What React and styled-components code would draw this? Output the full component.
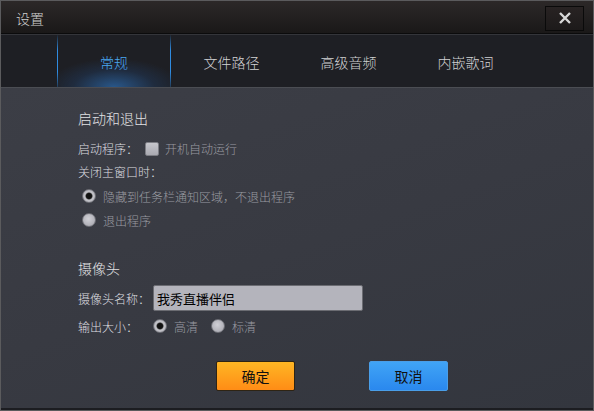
import React, { useState } from "react";
import styled, { createGlobalStyle } from "styled-components";

const GlobalStyle = createGlobalStyle`
  html, body {
    margin: 0;
    padding: 0;
    background: #2a2c32;
  }
  body {
    font-family: "Noto Sans CJK SC", "Noto Sans", sans-serif;
    font-weight: 300;
  }
`;

const tabs = ["常规", "文件路径", "高级音频", "内嵌歌词"];

function Radio({ checked, children }) {
  return (
    <RadioWrap>
      <RadioDot checked={checked} />
      <Muted>{children}</Muted>
    </RadioWrap>
  );
}

function App() {
  const [active, setActive] = useState(0);
  const [size, setSize] = useState(0);

  return (
    <>
      <GlobalStyle />
      <Window>
        <TitleBar>
          <Title>设置</Title>
          <CloseButton>
            <svg width="14" height="14" viewBox="0 0 14 14">
              <path d="M2 2 L12 12 M12 2 L2 12" stroke="#d8d8d8" strokeWidth="2.4" />
            </svg>
          </CloseButton>
        </TitleBar>
        <TabBar>
          {tabs.map((t, i) => (
            <Tab key={t} active={i === active} onClick={() => setActive(i)}>
              {t}
            </Tab>
          ))}
        </TabBar>
        <Content>
          <Heading>启动和退出</Heading>
          <Row h={23} mt={9}>
            <Label w={67}>启动程序：</Label>
            <Check />
            <Muted>开机自动运行</Muted>
          </Row>
          <Row h={23}>
            <Label>关闭主窗口时：</Label>
          </Row>
          <Row h={24} mt={1} indent={4}>
            <Radio checked>隐藏到任务栏通知区域，不退出程序</Radio>
          </Row>
          <Row h={24} indent={4}>
            <Radio>退出程序</Radio>
          </Row>

          <Heading mt={26}>摄像头</Heading>
          <Row h={26} mt={7}>
            <Label w={75}>摄像头名称：</Label>
            <NameInput defaultValue="我秀直播伴侣" />
          </Row>
          <Row h={22} mt={4}>
            <Label w={75}>输出大小：</Label>
            <RadioGroup>
              <span onClick={() => setSize(0)}>
                <Radio checked={size === 0}>高清</Radio>
              </span>
              <span onClick={() => setSize(1)}>
                <Radio checked={size === 1}>标清</Radio>
              </span>
            </RadioGroup>
          </Row>

          <ButtonRow>
            <Button variant="ok">确定</Button>
            <Button variant="cancel">取消</Button>
          </ButtonRow>
        </Content>
      </Window>
    </>
  );
}

export default App;

const Window = styled.div`
  width: 594px;
  height: 411px;
  box-sizing: border-box;
  border: 1px solid #5b5b5d;
  display: flex;
  flex-direction: column;
  overflow: hidden;
`;

const TitleBar = styled.div`
  height: 32px;
  flex-shrink: 0;
  display: flex;
  align-items: center;
  justify-content: space-between;
  padding: 0 9px 0 15px;
  background: linear-gradient(#2c2828, #1a1818);
  border-bottom: 1px solid #0b0b0c;
  box-shadow: 0 1px 0 #34353a;
`;

const Title = styled.div`
  color: #cfcfcf;
  font-size: 14px;
  margin-top: 2px;
`;

const CloseButton = styled.button`
  width: 39px;
  height: 25px;
  margin-top: 2px;
  box-sizing: border-box;
  border: 1px solid #0a0a0a;
  background: linear-gradient(#282323, #1d1a1a);
  display: flex;
  align-items: center;
  justify-content: center;
  padding: 0;
  cursor: pointer;
`;

const TabBar = styled.div`
  height: 52px;
  margin-top: 1px;
  flex-shrink: 0;
  display: flex;
  padding-left: 55px;
  background: #1e1f24;
  border-bottom: 1px solid #4b4d53;
`;

const Tab = styled.div`
  width: 117px;
  display: flex;
  align-items: center;
  justify-content: center;
  padding-top: 2px;
  box-sizing: border-box;
  font-size: 14px;
  cursor: pointer;
  color: ${(p) => (p.active ? "#4aa8f2" : "#d2d2d4")};
  border-left: 1px solid transparent;
  border-right: 1px solid transparent;
  ${(p) =>
    p.active &&
    `
    width: 114px;
    margin: 0 2px 0 1px;
    border-image: linear-gradient(rgba(40,120,200,0), #2f8be0 30%, #2f8be0 70%, rgba(40,120,200,0.2)) 1;
    background: radial-gradient(ellipse 60% 55% at 50% 100%, rgba(45,110,180,0.7), rgba(35,80,140,0.25) 60%, rgba(30,31,36,0) 100%);
  `}
`;

const Content = styled.div`
  flex: 1;
  padding: 20px 0 0 77px;
  display: flex;
  flex-direction: column;
  background: linear-gradient(160deg, #3c3e46 0%, #383a42 50%, #33363e 100%);
  border-bottom: 2px solid #1c1d21;
`;

const Heading = styled.div`
  height: 20px;
  line-height: 20px;
  font-size: 14px;
  color: #e2e2e4;
  margin-top: ${(p) => p.mt || 0}px;
`;

const Row = styled.div`
  height: ${(p) => p.h}px;
  margin-top: ${(p) => p.mt || 0}px;
  padding-left: ${(p) => p.indent || 0}px;
  display: flex;
  align-items: center;
`;

const Label = styled.span`
  font-size: 12px;
  color: #dedee0;
  width: ${(p) => (p.w ? `${p.w}px` : "auto")};
  flex-shrink: 0;
`;

const Muted = styled.span`
  font-size: 12px;
  color: #9a9ba1;
`;

const Check = styled.span`
  width: 12px;
  height: 12px;
  margin-right: 6px;
  border: 1px solid #7c7d84;
  border-radius: 2px;
  background: linear-gradient(#c6c6cc, #a9a9b1);
`;

const RadioWrap = styled.span`
  display: inline-flex;
  align-items: center;
  gap: 7px;
  cursor: pointer;
`;

const RadioDot = styled.span`
  width: 14px;
  height: 14px;
  border-radius: 50%;
  box-sizing: border-box;
  border: 1px solid #6e6f76;
  background: ${(p) =>
    p.checked
      ? "radial-gradient(circle, #111 0 2.5px, #333 3px, #c4c4ca 4px, #a8a8b0 100%)"
      : "radial-gradient(circle at 45% 40%, #d0d0d6, #a2a2aa)"};
`;

const RadioGroup = styled.div`
  display: flex;
  align-items: center;
  gap: 13px;
`;

const NameInput = styled.input`
  width: 210px;
  height: 26px;
  box-sizing: border-box;
  border: 1px solid #6b6c72;
  border-radius: 2px;
  background: #b4b4bc;
  color: #000;
  font-family: "Noto Sans CJK SC", sans-serif;
  font-weight: 400;
  font-size: 13px;
  padding: 0 3px;
  outline: none;
`;

const ButtonRow = styled.div`
  display: flex;
  gap: 74px;
  margin-top: 24px;
  margin-left: 138px;
`;

const Button = styled.button`
  width: 79px;
  height: 30px;
  box-sizing: border-box;
  border-radius: 2px;
  font-family: "Noto Sans CJK SC", sans-serif;
  font-weight: 400;
  font-size: 14px;
  color: #111;
  cursor: pointer;
  padding: 0;
  border: 1px solid ${(p) => (p.variant === "ok" ? "#2e2414" : "#4a9ee8")};
  background: ${(p) =>
    p.variant === "ok"
      ? "linear-gradient(#ffb624, #ff8c16)"
      : "linear-gradient(#40a4f6, #2a88ee)"};
`;
